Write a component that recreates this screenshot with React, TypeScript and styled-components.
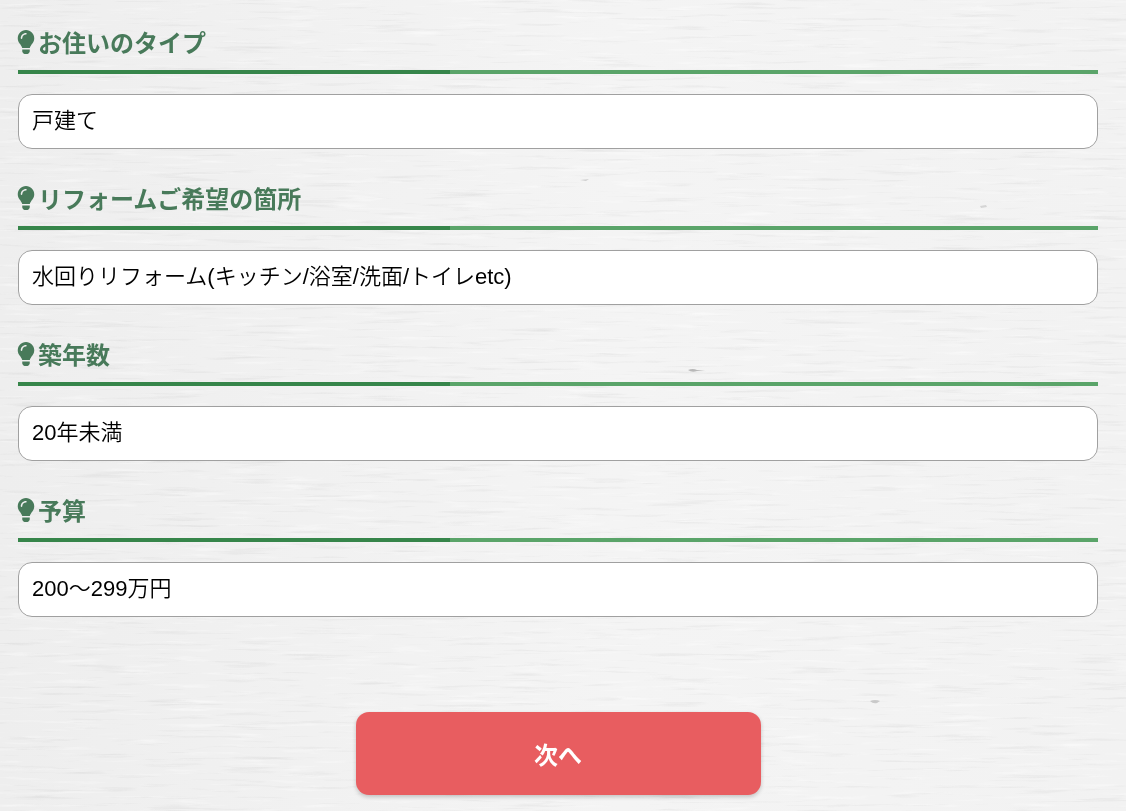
import React from "react";
import styled, { createGlobalStyle } from "styled-components";
import { FaLightbulb } from "react-icons/fa";

const GlobalStyle = createGlobalStyle`
  *, *::before, *::after { box-sizing: border-box; }
  body {
    margin: 0;
    background: linear-gradient(90deg, #eeeeee 0%, #f4f4f4 55%, #f2f2f2 100%);
    font-family: "Liberation Sans", "Noto Sans CJK JP", sans-serif;
  }
`;

const Grain = styled.svg`
  position: fixed;
  inset: 0;
  z-index: -1;
  width: 100%;
  height: 100%;
  pointer-events: none;
`;

const Form = styled.form`
  display: flex;
  flex-direction: column;
  padding: 24px 28px 16px 18px;
`;

const Field = styled.div`
  display: flex;
  flex-direction: column;
  gap: 20px;
  padding-bottom: 31px;
`;

const Title = styled.label`
  display: flex;
  align-items: center;
  gap: 4px;
  height: 50px;
  padding-bottom: 11px;
  color: #487a5a;
  font-family: "Noto Sans CJK JP", sans-serif;
  font-size: 24px;
  font-weight: 700;
  line-height: 36px;
  border-bottom: 4px solid;
  border-image: linear-gradient(90deg, #36854a 40%, #5aa469 40%) 1;
`;

const Bulb = styled(FaLightbulb)`
  width: 16px;
  height: 24px;
  overflow: visible;
`;

const Select = styled.select`
  appearance: none;
  width: 100%;
  height: 55px;
  padding: 0 13px 2px;
  border: 1px solid #a0a0a0;
  border-radius: 14px;
  background: #ffffff;
  color: #000000;
  font-family: "Liberation Sans", "Noto Sans CJK JP", sans-serif;
  font-size: 22px;
  font-weight: 350;
`;

const NextButton = styled.button`
  align-self: center;
  width: 37.5%;
  height: 83px;
  margin-top: 64px;
  padding: 0;
  border: 0;
  border-radius: 13px;
  background: #e85d60;
  box-shadow: 0 2px 4px rgba(0, 0, 0, 0.2);
  color: #ffffff;
  font-family: "Noto Sans CJK JP", sans-serif;
  font-size: 24px;
  font-weight: 700;
  cursor: pointer;
`;

const fields = [
  { id: "house", title: "お住いのタイプ", options: ["戸建て", "マンション"] },
  {
    id: "place",
    title: "リフォームご希望の箇所",
    options: ["水回りリフォーム(キッチン/浴室/洗面/トイレetc)", "外壁・屋根"],
  },
  { id: "age", title: "築年数", options: ["20年未満", "20年以上"] },
  { id: "budget", title: "予算", options: ["200〜299万円", "300〜399万円"] },
];

function WoodGrain() {
  return (
    <Grain aria-hidden="true">
      <filter id="dark-grain" x="0" y="0" width="100%" height="100%" colorInterpolationFilters="sRGB">
        <feTurbulence type="fractalNoise" baseFrequency="0.014 0.28" numOctaves="4" seed="7" />
        <feColorMatrix values="0 0 0 0 0.6  0 0 0 0 0.6  0 0 0 0 0.6  1.2 0 0 0 -0.7" />
      </filter>
      <filter id="light-grain" x="0" y="0" width="100%" height="100%" colorInterpolationFilters="sRGB">
        <feTurbulence type="fractalNoise" baseFrequency="0.018 0.25" numOctaves="4" seed="23" />
        <feColorMatrix values="0 0 0 0 1  0 0 0 0 1  0 0 0 0 1  3 0 0 0 -1.7" />
      </filter>
      <rect width="100%" height="100%" filter="url(#dark-grain)" opacity="0.35" />
      <rect width="100%" height="100%" filter="url(#light-grain)" opacity="0.45" />
      <g fill="#b8b8b8">
        <path d="M688 370q5-2 9 0l8 0-8 1q-5 2-9-1z" />
        <path d="M870 701q5-2 10 0l-3 2q-4 1-7-2z" opacity="0.7" />
        <path d="M980 206l6-1 1 2-6 1z" opacity="0.5" />
        <path d="M580 180l9-1-3 2z" opacity="0.6" />
      </g>
    </Grain>
  );
}

export default function App() {
  return (
    <>
      <GlobalStyle />
      <WoodGrain />
      <Form onSubmit={(e: React.FormEvent) => e.preventDefault()}>
        {fields.map((field) => (
          <Field key={field.id}>
            <Title htmlFor={field.id}>
              <Bulb aria-hidden="true" preserveAspectRatio="xMidYMid slice" />
              {field.title}
            </Title>
            <Select id={field.id} name={field.id}>
              {field.options.map((option) => (
                <option key={option}>{option}</option>
              ))}
            </Select>
          </Field>
        ))}
        <NextButton type="submit">次へ</NextButton>
      </Form>
    </>
  );
}
